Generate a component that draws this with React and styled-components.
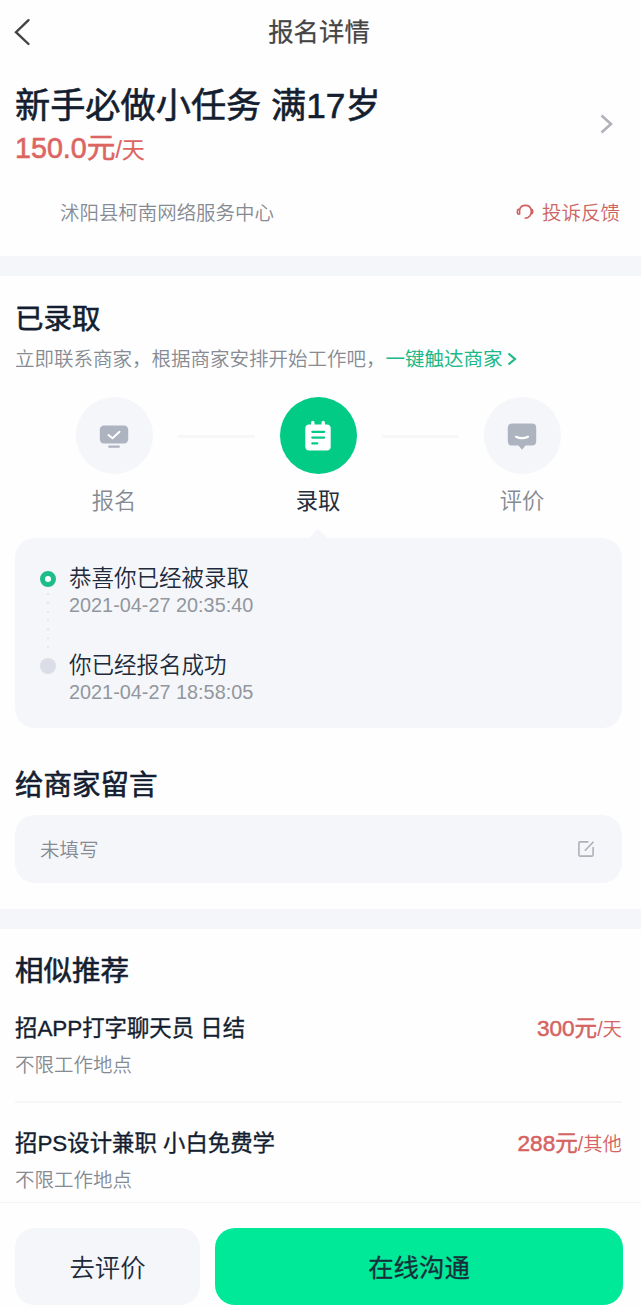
import styled, { createGlobalStyle } from "styled-components";

const GlobalStyle = createGlobalStyle`
  * {
    box-sizing: border-box;
  }

  body {
    margin: 0;
    background: #fefefe;
    color: #141e30;
    font-family: "Liberation Sans", "Noto Sans CJK SC", sans-serif;
  }

  button {
    font-family: inherit;
    border: none;
    padding: 0;
    background: none;
    cursor: pointer;
  }
`;

const jobs = [
  { title: "招APP打字聊天员 日结", place: "不限工作地点", pay: "300元", unit: "/天" },
  { title: "招PS设计兼职 小白免费学", place: "不限工作地点", pay: "288元", unit: "/其他" },
];

const BackIcon = () => (
  <svg width="18" height="28" viewBox="0 0 18 28" fill="none" stroke="#444" strokeWidth="2.4" strokeLinecap="round">
    <path d="M15.5 2.2 3 14.2 15.5 26" />
  </svg>
);

const ChevronIcon = ({ width, height, color, weight }) => (
  <svg width={width} height={height} viewBox={`0 0 ${width} ${height}`} fill="none" stroke={color} strokeWidth={weight}>
    <path d={`M1.5 1.5 ${width - 2} ${height / 2} 1.5 ${height - 1.5}`} />
  </svg>
);

const HeadsetIcon = () => (
  <svg width="18" height="18" viewBox="0 0 18 18" fill="none" stroke="#d0605f" strokeWidth="1.6">
    <path d="M3.6 12.4V8.2A5.900 5.900 0 0 1 15.2 8.2C16 12.800 13 16.200 8.600 16.200" />
    <path d="M3.6 7.4H2.400Q1.300 7.600 1.300 9.800T2.400 12.200h1.200M15 7.200q1.700 0 1.700 2.400T15 12" />
  </svg>
);

const ScreenIcon = () => (
  <svg width="30" height="30" viewBox="0 0 30 30">
    <rect x="0.8" y="4.5" width="28.4" height="18" rx="4.2" fill="#aeb3c0" />
    <rect x="9" y="24.5" width="12" height="2.2" rx="1.1" fill="#aeb3c0" />
    <path d="m9.5 14 4 3.2 7-6.5" fill="none" stroke="#fff" strokeWidth="2" strokeLinecap="round" />
  </svg>
);

const NoteIcon = () => (
  <svg width="30" height="32" viewBox="0 0 30 32">
    <rect x="2.3" y="4.5" width="25.4" height="26" rx="4" fill="#fff" />
    <path d="M9.8 2.5v5M20.2 2.5v5" stroke="#fff" strokeWidth="3.4" strokeLinecap="round" />
    <path d="M9.3 11.8h11.8M9.3 17.6h11.8M9.3 23.4h5" stroke="#02cb85" strokeWidth="2.2" strokeLinecap="round" />
  </svg>
);

const ChatIcon = () => (
  <svg width="30" height="30" viewBox="0 0 30 30">
    <path
      d="M5 2.5h20q4.2 0 4.2 4.2v13.6q0 4.2-4.2 4.2h-6.500L15 28.700 11.500 24.500H5Q.8 24.500 .8 20.300V6.700Q.8 2.500 5 2.500Z"
      fill="#aeb3c0"
    />
    <path d="M9 15.8q6 2.8 12 0" fill="none" stroke="#fff" strokeWidth="2.2" strokeLinecap="round" />
  </svg>
);

const EditIcon = () => (
  <svg width="18" height="18" viewBox="0 0 18 18" fill="none" stroke="#aeb1b8" strokeWidth="1.6">
    <path d="M11.5 1.9H2.9q-1 0-1 1v12.200q0 1 1 1h12.200q1 0 1-1V7M7.800 10.700 16.500 1.700" />
  </svg>
);

const App = () => {
  return (
    <Page>
      <GlobalStyle />
      <Header>
        <BackButton aria-label="返回">
          <BackIcon />
        </BackButton>
        <HeaderTitle>报名详情</HeaderTitle>
      </Header>

      <JobSummary>
        <JobRow>
          <div>
            <JobTitle>新手必做小任务 满17岁</JobTitle>
            <JobPay>
              150.0元<small>/天</small>
            </JobPay>
          </div>
          <ChevronIcon width={13} height={20} color="#b0b2b8" weight={2.6} />
        </JobRow>
        <CompanyRow>
          <Company>沭阳县柯南网络服务中心</Company>
          <Complaint>
            <HeadsetIcon />
            投诉反馈
          </Complaint>
        </CompanyRow>
      </JobSummary>

      <Band />

      <Status>
        <SectionTitle>已录取</SectionTitle>
        <Hint>
          立即联系商家，根据商家安排开始工作吧，
          <Contact>
            一键触达商家
            <ChevronIcon width={10} height={14} color="#20b889" weight={2.2} />
          </Contact>
        </Hint>
        <Steps>
          <Step>
            <StepCircle>
              <ScreenIcon />
            </StepCircle>
            <StepLabel>报名</StepLabel>
          </Step>
          <StepLine />
          <Step>
            <StepCircle $active>
              <NoteIcon />
            </StepCircle>
            <StepLabel $active>录取</StepLabel>
          </Step>
          <StepLine />
          <Step>
            <StepCircle>
              <ChatIcon />
            </StepCircle>
            <StepLabel>评价</StepLabel>
          </Step>
        </Steps>
        <Timeline>
          <Event>
            <Track>
              <Dot $active />
              <Dots viewBox="0 0 4 58">
                <path d="M2 2v56" stroke="#dfe1e7" strokeWidth="2" strokeLinecap="round" strokeDasharray="0.1 8.8" />
              </Dots>
            </Track>
            <div>
              <EventName>恭喜你已经被录取</EventName>
              <EventTime>2021-04-27 20:35:40</EventTime>
            </div>
          </Event>
          <Event>
            <Track>
              <Dot />
            </Track>
            <div>
              <EventName>你已经报名成功</EventName>
              <EventTime>2021-04-27 18:58:05</EventTime>
            </div>
          </Event>
        </Timeline>
      </Status>

      <Message>
        <SectionTitle>给商家留言</SectionTitle>
        <MessageBox>
          未填写
          <EditIcon />
        </MessageBox>
      </Message>

      <Band />

      <Similar>
        <SectionTitle>相似推荐</SectionTitle>
        {jobs.map((job) => (
          <JobItem key={job.title}>
            <ItemTop>
              <ItemTitle>{job.title}</ItemTitle>
              <ItemPay>
                {job.pay}
                <small>{job.unit}</small>
              </ItemPay>
            </ItemTop>
            <ItemPlace>{job.place}</ItemPlace>
          </JobItem>
        ))}
      </Similar>

      <Footer>
        <ReviewButton>去评价</ReviewButton>
        <ChatButton>在线沟通</ChatButton>
      </Footer>
    </Page>
  );
};

const Page = styled.div`
  display: flex;
  flex-direction: column;
  width: 641px;
  height: 1308px;
  overflow: hidden;
  white-space: nowrap;
`;

const Header = styled.header`
  display: grid;
  grid-template-columns: 60px 1fr 60px;
  align-items: center;
  height: 64px;
  padding-right: 3px;
`;

const BackButton = styled.button`
  display: flex;
  padding-left: 13px;
`;

const HeaderTitle = styled.h1`
  margin: 0;
  text-align: center;
  font-size: 25.4px;
  line-height: 64px;
  font-weight: 400;
  color: #444;
  -webkit-text-stroke: 0.25px;
`;

const JobSummary = styled.section`
  height: 192px;
  padding: 18px 21px 0 15px;
`;

const JobRow = styled.div`
  display: flex;
  justify-content: space-between;
  padding-right: 7px;

  > svg {
    margin-top: 32px;
  }
`;

const JobTitle = styled.h2`
  margin: 0;
  font-size: 35.2px;
  line-height: 48px;
  font-weight: 400;
  -webkit-text-stroke: 0.6px;
`;

const JobPay = styled.div`
  font-size: 28.7px;
  line-height: 37px;
  color: #dc6562;
  -webkit-text-stroke: 0.6px;

  small {
    font-size: 23px;
    -webkit-text-stroke: 0.2px;
  }
`;

const CompanyRow = styled.div`
  display: flex;
  justify-content: space-between;
  align-items: center;
  height: 40px;
  margin-top: 22px;
  padding-left: 45px;
`;

const Company = styled.span`
  font-size: 19.45px;
  font-weight: 350;
  color: #858a93;
`;

const Complaint = styled.button`
  display: flex;
  align-items: center;
  gap: 8px;
  font-size: 19.5px;
  font-weight: 350;
  color: #cd6462;
`;

const Band = styled.div`
  flex: none;
  height: 20px;
  background: #f5f6fa;
`;

const Status = styled.section`
  height: 475px;
  padding: 23px 19px 0 15px;
`;

const SectionTitle = styled.h2`
  margin: 0;
  font-size: 28.5px;
  line-height: 40px;
  font-weight: 400;
  -webkit-text-stroke: 0.6px;
`;

const Hint = styled.div`
  display: flex;
  font-size: 19.5px;
  line-height: 40px;
  font-weight: 350;
  color: #858a93;
`;

const Contact = styled.a`
  display: flex;
  align-items: center;
  gap: 4px;
  font-weight: 400;
  color: #20b889;
`;

const Steps = styled.div`
  display: flex;
  justify-content: center;
  gap: 25px;
  margin-top: 18px;
  padding-right: 1px;
`;

const Step = styled.div`
  display: flex;
  flex-direction: column;
  align-items: center;
  width: 77px;
`;

const StepCircle = styled.div`
  display: flex;
  align-items: center;
  justify-content: center;
  width: 77px;
  height: 77px;
  border-radius: 50%;
  background: ${({ $active }) => ($active ? "#02cb85" : "#f5f6fa")};
`;

const StepLabel = styled.span`
  margin-top: 9px;
  font-size: 22.3px;
  line-height: 38px;
  font-weight: ${({ $active }) => ($active ? 400 : 350)};
  color: ${({ $active }) => ($active ? "#252e3d" : "#858a93")};
`;

const StepLine = styled.div`
  width: 77px;
  height: 3px;
  margin-top: 38px;
  background: #f7f7f9;
`;

const Timeline = styled.div`
  position: relative;
  height: 190px;
  margin-top: 17px;
  padding: 25px 24px;
  border-radius: 20px;
  background: #f5f6fa;

  &::before {
    content: "";
    position: absolute;
    top: -9px;
    left: 293px;
    border: 10px solid transparent;
    border-top: none;
    border-bottom-color: #f5f6fa;
  }
`;

const Event = styled.div`
  display: flex;
  gap: 13px;
  height: 86.5px;
`;

const Track = styled.div`
  display: flex;
  flex-direction: column;
  align-items: center;
  width: 17px;
  padding-top: 8px;
`;

const Dot = styled.i`
  width: 16px;
  height: 16px;
  border-radius: 50%;
  border: ${({ $active }) => ($active ? "5px solid #1dbd89" : "none")};
  background: ${({ $active }) => ($active ? "#fff" : "#dcdee7")};
`;

const Dots = styled.svg`
  width: 4px;
  height: 58px;
  margin-top: 5px;
`;

const EventName = styled.div`
  padding-top: 1px;
  font-size: 22.5px;
  line-height: 30px;
  font-weight: 350;
  color: #202a3a;
`;

const EventTime = styled.div`
  font-size: 19.85px;
  line-height: 22px;
  color: #92969d;
`;

const Message = styled.section`
  height: 158px;
  padding: 14px 19px 0 15px;
`;

const MessageBox = styled.div`
  display: flex;
  justify-content: space-between;
  align-items: center;
  height: 68px;
  margin-top: 10px;
  padding: 0 27px 1px 25px;
  border-radius: 20px;
  background: #f5f6fa;
  font-size: 19.5px;
  font-weight: 350;
  color: #858a93;
`;

const Similar = styled.section`
  height: 273px;
  padding: 22px 19px 0 15px;
`;

const JobItem = styled.article`
  height: 110px;
  padding-top: 21px;

  & + & {
    padding-top: 24px;
    border-top: 2px solid #f6f6f8;
  }
`;

const ItemTop = styled.div`
  display: flex;
  justify-content: space-between;
  line-height: 34px;
`;

const ItemTitle = styled.h3`
  margin: 0;
  font-size: 22.4px;
  font-weight: 400;
  -webkit-text-stroke: 0.35px;
`;

const ItemPay = styled.span`
  font-size: 22.6px;
  color: #d56361;
  -webkit-text-stroke: 0.5px;

  small {
    font-size: 19.4px;
    font-weight: 350;
    -webkit-text-stroke: 0;
  }
`;

const ItemPlace = styled.div`
  margin-top: 2px;
  font-size: 19.5px;
  line-height: 34px;
  font-weight: 350;
  color: #858a93;
`;

const Footer = styled.footer`
  display: flex;
  gap: 15px;
  height: 106px;
  padding: 25px 18px 0 15px;
  border-top: 1px solid #f4f4f6;
  background: #fefefe;
`;

const ReviewButton = styled.button`
  width: 185px;
  height: 77px;
  padding-bottom: 2px;
  border-radius: 20px;
  background: #f5f6fa;
  font-size: 25.4px;
  font-weight: 350;
  color: #202a3a;
`;

const ChatButton = styled.button`
  flex: 1;
  height: 77px;
  padding-bottom: 2px;
  border-radius: 20px;
  background: #00e999;
  font-size: 25.4px;
  color: #14303a;
  -webkit-text-stroke: 0.3px;
`;

export default App;
